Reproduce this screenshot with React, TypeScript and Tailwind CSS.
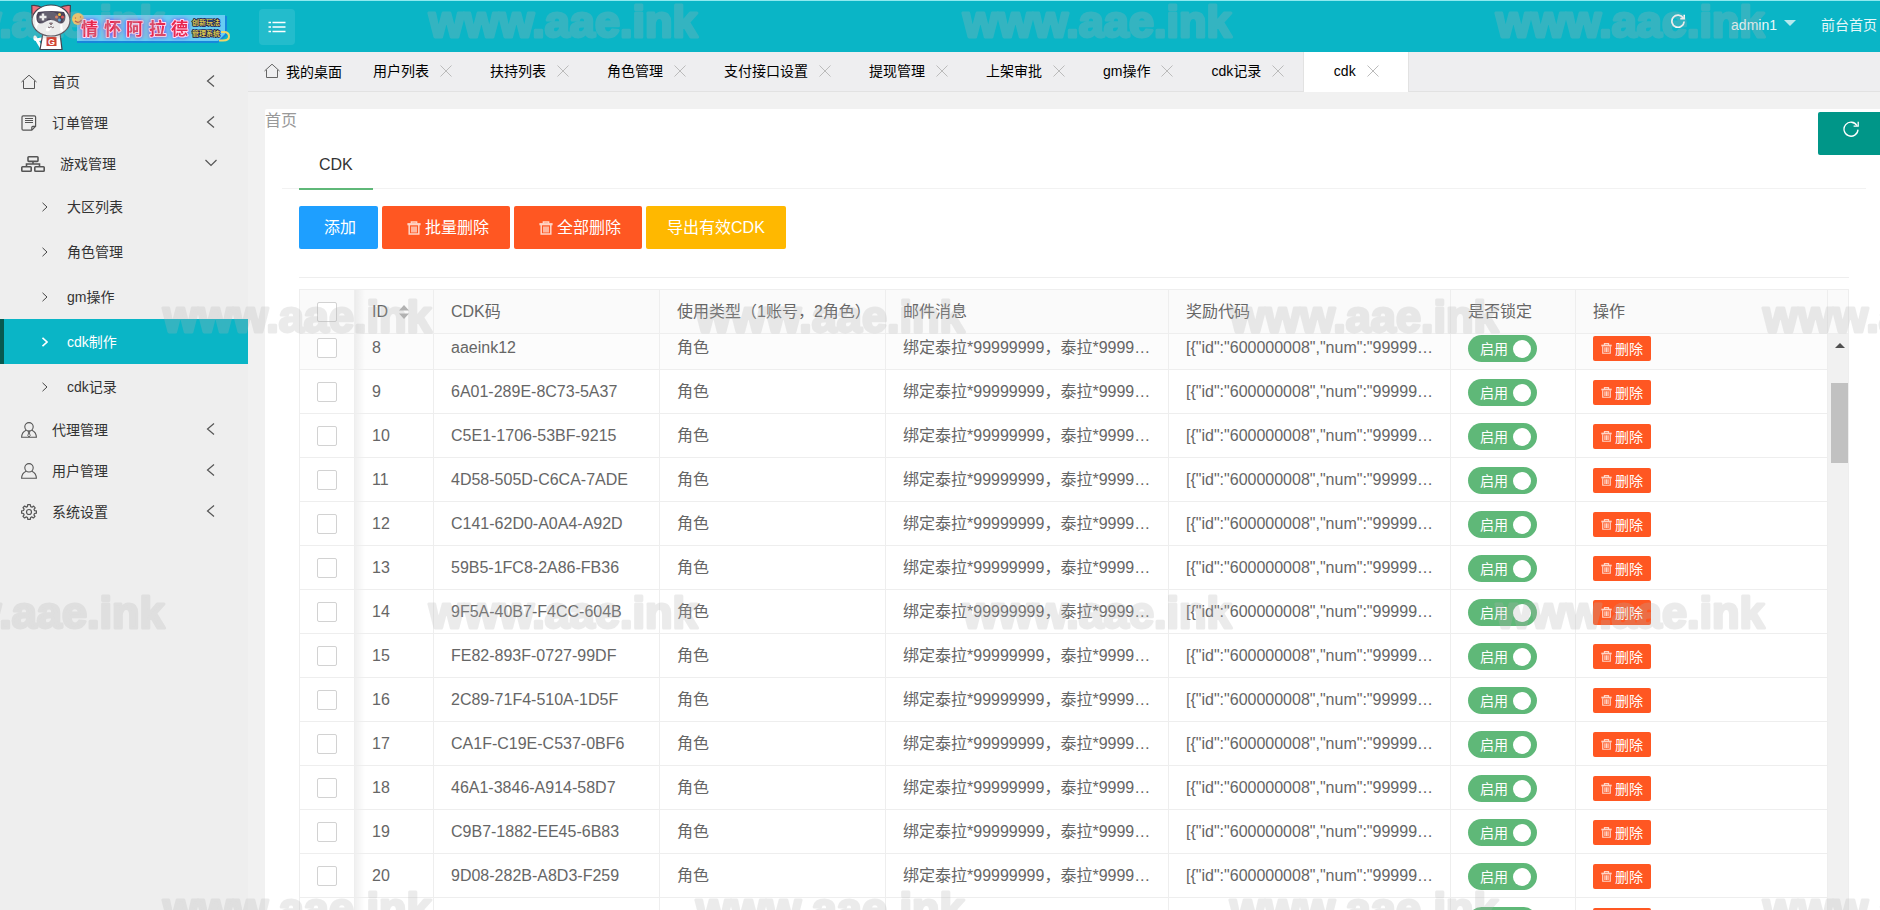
import { useLayoutEffect, useRef, type ReactNode } from 'react'

interface CdkRow {
  id: number
  code: string
}

interface MenuItem {
  label: string
  icon: ReactNode
  open?: boolean
  children?: string[]
}

const rows: CdkRow[] = [
  { id: 8, code: 'aaeink12' },
  { id: 9, code: '6A01-289E-8C73-5A37' },
  { id: 10, code: 'C5E1-1706-53BF-9215' },
  { id: 11, code: '4D58-505D-C6CA-7ADE' },
  { id: 12, code: 'C141-62D0-A0A4-A92D' },
  { id: 13, code: '59B5-1FC8-2A86-FB36' },
  { id: 14, code: '9F5A-40B7-F4CC-604B' },
  { id: 15, code: 'FE82-893F-0727-99DF' },
  { id: 16, code: '2C89-71F4-510A-1D5F' },
  { id: 17, code: 'CA1F-C19E-C537-0BF6' },
  { id: 18, code: '46A1-3846-A914-58D7' },
  { id: 19, code: 'C9B7-1882-EE45-6B83' },
  { id: 20, code: '9D08-282B-A8D3-F259' },
  { id: 21, code: '7B3E-51C0-D9A4-E826' },
]

const mail = '绑定泰拉*99999999，泰拉*99999999'
const reward = '[{"id":"600000008","num":"99999999"}]'

const tabs = ['用户列表', '扶持列表', '角色管理', '支付接口设置', '提现管理', '上架审批', 'gm操作', 'cdk记录', 'cdk']

function HomeIcon({ className = '' }: { className?: string }) {
  return (
    <svg viewBox="0 0 16 16" className={`h-4 w-4 shrink-0 ${className}`} fill="none" stroke="currentColor">
      <path d="M0.5 8 L8 1.2 L15.5 8 M2.5 6.8 V14.5 H13.5 V6.8" />
    </svg>
  )
}

function NoteIcon() {
  return (
    <svg viewBox="0 0 16 16" className="h-4 w-4 shrink-0" fill="none" stroke="currentColor" strokeWidth="1.2">
      <path d="M2.2 0.8 H13.4 Q14.6 0.8 14.6 2 V11.2 L10.8 15.2 H2.2 Q1 15.2 1 14 V2 Q1 0.8 2.2 0.8 Z" />
      <path d="M10.8 15 V12.4 Q10.8 11.4 11.8 11.4 H14.4" />
      <path d="M4 3.5 H12 M4 5.5 H12 M4 7.500 H12" strokeWidth="1" />
    </svg>
  )
}

function SitemapIcon() {
  return (
    <svg viewBox="0 0 24 16" className="h-4 w-6 shrink-0" fill="none" stroke="currentColor" strokeWidth="1.6">
      <rect x="7" y="0.8" width="10" height="4.6" rx="0.8" />
      <rect x="0.8" y="10.8" width="9.4" height="4.4" rx="0.8" />
      <rect x="13.8" y="10.8" width="9.4" height="4.4" rx="0.8" />
      <path d="M12 5.4 V8 M5.5 10.8 V8 H18.5 V10.8" />
    </svg>
  )
}

function UserIcon({ tie = false }: { tie?: boolean }) {
  return (
    <svg viewBox="0 0 16 16" className="h-4 w-4 shrink-0" fill="none" stroke="currentColor" strokeWidth="1.1">
      <circle cx="8" cy="4.8" r="4.2" />
      <path d="M5.2 8.2 Q0.8 10 0.6 15.3 H15.4 Q15.2 10 10.8 8.2" />
      {tie && <path d="M7 9.3 H9 L8.4 11 L9.2 13.6 L8 15 L6.8 13.6 L7.6 11 Z" strokeWidth="0.9" />}
    </svg>
  )
}

function GearIcon() {
  return (
    <svg viewBox="0 0 16 16" className="h-4 w-4 shrink-0" fill="none" stroke="currentColor" strokeWidth="1.2" strokeLinejoin="round">
      <path d="M6.7 0.7 H9.3 L9.7 2.6 L11.1 3.2 L12.6 2.1 L14.2 3.8 L13 5.4 L13.5 6.6 L15.4 6.9 V9.2 L13.5 9.5 L12.9 10.9 L14 12.4 L12.4 14 L10.9 12.9 L9.6 13.5 L9.3 15.3 H6.8 L6.5 13.5 L5.1 12.9 L3.6 14 L2 12.4 L3.1 10.8 L2.5 9.5 L0.6 9.2 V6.9 L2.5 6.5 L3.1 5.2 L2 3.6 L3.6 2 L5.1 3.1 L6.4 2.6 Z" />
      <circle cx="8" cy="8" r="2.5" />
    </svg>
  )
}

function TrashIcon({ className }: { className: string }) {
  return (
    <svg viewBox="0 0 14 14" className={`shrink-0 opacity-75 ${className}`} fill="none" stroke="currentColor" strokeWidth="1.5">
      <path d="M0.4 3.2 H13.6" strokeWidth="2.2" />
      <path d="M4.4 2.4 V0.9 H9.6 V2.4" />
      <path d="M2.2 4 V13 H11.8 V4 M5 5.4 V11.4 M7 5.4 V11.4 M9 5.4 V11.4" />
    </svg>
  )
}

function RefreshIcon({ className, width }: { className: string; width: number }) {
  return (
    <svg viewBox="0 0 16 16" className={className} fill="none" stroke="currentColor" strokeWidth={width}>
      <path d="M14 4.6 A7 7 0 1 0 15 8.6" />
      <path d="M15.2 0.8 V5.2 H10.6" />
    </svg>
  )
}

const menu: MenuItem[] = [
  { label: '首页', icon: <HomeIcon /> },
  { label: '订单管理', icon: <NoteIcon /> },
  {
    label: '游戏管理',
    icon: <SitemapIcon />,
    open: true,
    children: ['大区列表', '角色管理', 'gm操作', 'cdk制作', 'cdk记录'],
  },
  { label: '代理管理', icon: <UserIcon tie /> },
  { label: '用户管理', icon: <UserIcon /> },
  { label: '系统设置', icon: <GearIcon /> },
]

function Logo() {
  return (
    <svg viewBox="0 0 200 48" className="h-12 w-[200px] shrink-0" role="img" aria-label="情怀阿拉德">
      {/* Cat mascot */}
      <path d="M10 36 Q3 38 4 34 M4 34 L10 44" fill="none" stroke="#fff" strokeWidth="3" strokeLinecap="round" />
      <path d="M12 30 H29 L31 46.5 H9 Z" fill="#fff" stroke="#44424e" strokeWidth="1.2" />
      <path d="M1 14 L0.8 2.5 Q6 1.5 12 5 Z M39 14 L39.4 2.5 Q34 1.5 28 5 Z" fill="#f0707c" stroke="#44424e" strokeWidth="1.2" />
      <ellipse cx="20" cy="17.5" rx="19" ry="15.5" fill="#fff" stroke="#44424e" strokeWidth="1.2" />
      <path d="M7 9 Q20 7 33 9 Q36 14 33 19 Q30 22 26 19 Q20 15 14 19 Q9 22 6.5 19 Q4 14 7 9 Z" fill="#4a4458" />
      <path d="M12 10.5 V17.5 M8.5 14 H15.5" stroke="#fff" strokeWidth="2.4" />
      <circle cx="28.5" cy="11.5" r="1.5" fill="#f6c244" />
      <circle cx="31.5" cy="14" r="1.5" fill="#e05555" />
      <circle cx="28.5" cy="17" r="1.5" fill="#4aa3df" />
      <circle cx="25.5" cy="14" r="1.5" fill="#e8734a" />
      <path d="M18.5 20 H21.5 L20 22 Z M17 24 Q18.5 25.5 20 23.5 Q21.5 25.5 23 24" fill="#e58a8a" stroke="#44424e" strokeWidth="0.8" />
      <rect x="15.5" y="34" width="10" height="9" fill="#cf4436" />
      <text x="20.5" y="42" textAnchor="middle" fontSize="9" fontWeight="700" fill="#fff" fontFamily="Liberation Sans, sans-serif">G</text>

      {/* Banner */}
      <path d="M46 13 H196 V32 L187 40 H46 Z" fill="#1787dc" />
      <path d="M46 12 H194 V31 L187 38 H46 Z" fill="#67cdf3" />
      <path d="M190 29 H193 Q198 29 198 33.5 Q198 37.5 192 37.5 H188" fill="none" stroke="#f0d668" strokeWidth="2" />
      <circle cx="47" cy="16" r="6" fill="#f7c85a" />
      <path d="M44.5 14.5 V15.5 M49.5 13.5 V14.5 M44 18 Q47.5 21 50.5 17" fill="none" stroke="#b8472e" strokeWidth="1.2" />
      <g fontFamily="Noto Sans CJK SC, sans-serif" fontWeight="700" strokeLinejoin="round" paintOrder="stroke">
        <text x="50 73 95 118 140" y="32" fontSize="17" stroke="#ffd9f2" strokeWidth="2" fill="#e8274f" className="drop-shadow-[0_0_2px_#7a3ff0]">
          情怀阿拉德
        </text>
        <text x="161" y="22" fontSize="7" stroke="#1c1a55" strokeWidth="1.6" fill="#d9c94c">创新玩法</text>
        <text x="161" y="33" fontSize="7" stroke="#1c1a55" strokeWidth="1.6" fill="#d9c94c">管理系统</text>
      </g>
    </svg>
  )
}

function Header() {
  return (
    <header className="flex h-[52px] shrink-0 items-center border-t border-[#8fe9ef] bg-[#0ab5c6] pr-[3px] pl-[31px] text-sm text-white">
      <Logo />
      <button className="ml-7 flex h-9 w-9 items-center justify-center rounded-sm bg-white/10" aria-label="切换菜单">
        <svg viewBox="0 0 18 12" className="h-3 w-[18px]" stroke="currentColor" strokeWidth="1.3">
          <path d="M0.5 1.5 H3 M4.5 1.5 H17.5 M0.5 6 H3 M4.5 6 H17.5 M0.5 10.5 H3 M4.5 10.5 H17.5" />
        </svg>
      </button>
      <nav className="ml-auto flex items-center">
        <button className="mr-[46px] mb-3" aria-label="刷新">
          <RefreshIcon className="h-[14px] w-[14px]" width={2} />
        </button>
        <button className="mr-[25px] mb-[3px] flex items-center gap-[7px] text-white/90">
          admin1
          <span className="mb-1 border-x-[6px] border-t-[6px] border-x-transparent border-t-white/70" />
        </button>
        <a href="#" className="mb-[3px] text-white/90">前台首页</a>
      </nav>
    </header>
  )
}

function Sidebar() {
  return (
    <aside className="w-[248px] shrink-0 bg-[#eee] pt-[9px] text-sm text-[#333]">
      {menu.map((item) => (
        <div key={item.label}>
          <a href="#" className="flex h-[41px] items-center pr-[31px] pl-[21px]">
            <span className="mr-[15px] text-[#555]">{item.icon}</span>
            {item.label}
            <svg viewBox="0 0 12 12" className="mb-[2px] ml-auto h-3 w-3" fill="none" stroke="#555" strokeWidth="1.2">
              <path d={item.open ? 'M0.5 3 L6 8.5 L11.5 3' : 'M9 0.5 L2.5 6 L9 11.5'} />
            </svg>
          </a>
          {item.children?.map((child) => {
            const active = child === 'cdk制作'
            return (
              <a
                key={child}
                href="#"
                className={`flex h-[45px] items-center gap-[19px] border-l-4 pl-[38px] ${active ? 'border-[#08594f] bg-[#0ab5c6] text-white' : 'border-transparent'}`}
              >
                <svg viewBox="0 0 6 10" className="h-[10px] w-[6px]" fill="none" stroke="currentColor" strokeWidth={active ? 1.6 : 0.9}>
                  <path d="M0.5 0.8 L5 5 L0.5 9.2" />
                </svg>
                {child}
              </a>
            )
          })}
        </div>
      ))}
    </aside>
  )
}

function TabBar() {
  return (
    <div className="flex h-10 shrink-0 border-b border-[#e2e2e2] bg-[#eeeef0] pl-4 text-sm text-black">
      <a href="#" className="mr-3 flex h-[39px] items-center gap-[6px]">
        <HomeIcon className="mb-[2px] text-[#666]" />
        我的桌面
      </a>
      {tabs.map((tab) => (
        <div
          key={tab}
          className={`flex min-w-[106px] items-center justify-center gap-[11px] border-x px-[18px] pb-[2px] ${tab === 'cdk' ? 'h-10 border-[#e2e2e2] bg-white' : 'h-[39px] border-transparent'}`}
        >
          <a href="#">{tab}</a>
          <button aria-label={`关闭${tab}`}>
            <svg viewBox="0 0 12 12" className="h-3 w-3" stroke="#bbb">
              <path d="M0.5 0.5 L11.5 11.5 M11.5 0.5 L0.5 11.5" />
            </svg>
          </button>
        </div>
      ))}
    </div>
  )
}

function Cols() {
  return (
    <colgroup>
      <col className="w-[55px]" />
      <col className="w-[79px]" />
      <col className="w-[226px]" />
      <col className="w-[226px]" />
      <col className="w-[283px]" />
      <col className="w-[282px]" />
      <col className="w-[125px]" />
      <col />
    </colgroup>
  )
}

function Checkbox({ label }: { label: string }) {
  return (
    <input
      type="checkbox"
      aria-label={label}
      className="mx-auto block h-5 w-5 appearance-none rounded-xs border border-[#d2d2d2] bg-white"
    />
  )
}

const cell = 'border-r border-b border-[#eee] pl-[17px] pr-4 text-left font-normal'
const fixedEdge = 'bg-[linear-gradient(to_right,rgba(0,0,0,0.06),transparent_10px)]'

function CdkTable() {
  const body = useRef<HTMLDivElement>(null)

  useLayoutEffect(() => {
    if (body.current) body.current.scrollTop = 8
  }, [])

  return (
    <div className="mt-[11px] flex min-h-0 flex-1 flex-col border border-b-0 border-[#eee] text-base text-[#666]">
      <div className="flex shrink-0 bg-[#fafafa]">
        <div className="min-w-0 flex-1">
          <table className="w-full table-fixed border-separate border-spacing-0">
            <Cols />
            <thead>
              <tr className="h-11">
                <th className="border-r border-b border-[#eee]"><Checkbox label="全选" /></th>
                <th className={`${cell} ${fixedEdge}`}>
                  <div className="flex items-center gap-[11px]">
                    ID
                    <svg viewBox="0 0 10 14" className="h-[14px] w-[10px]" fill="#b2b2b2">
                      <path d="M0 5.5 L5 0 L10 5.5 Z M0 8.5 L5 14 L10 8.5 Z" />
                    </svg>
                  </div>
                </th>
                <th className={cell}>CDK码</th>
                <th className={`${cell} whitespace-nowrap`}>使用类型（1账号，2角色）</th>
                <th className={cell}>邮件消息</th>
                <th className={cell}>奖励代码</th>
                <th className={cell}>是否锁定</th>
                <th className={cell}>操作</th>
              </tr>
            </thead>
          </table>
        </div>
        <div className="w-5 border-b border-[#eee]" />
      </div>

      <div className="flex min-h-0 flex-1">
        <div ref={body} className="min-w-0 flex-1 overflow-hidden">
          <table className="w-full table-fixed border-separate border-spacing-0">
            <Cols />
            <tbody>
              {rows.map((row) => (
                <tr key={row.id} className={`h-11 ${row.id === 8 ? 'bg-[#fcfcfc]' : ''}`}>
                  <td className="border-r border-b border-[#eee]"><Checkbox label={`选择 ${row.id}`} /></td>
                  <td className={`${cell} ${fixedEdge}`}>{row.id}</td>
                  <td className={cell}>{row.code}</td>
                  <td className={cell}>角色</td>
                  <td className={`${cell} truncate`}>{mail}</td>
                  <td className={`${cell} truncate`}>{reward}</td>
                  <td className={`${cell} pt-[2px]`}>
                    <label className="relative flex h-[27px] w-[69px] items-center justify-between rounded-full bg-[#5fb878] pr-[6px] pl-3 text-sm text-white">
                      <input type="checkbox" defaultChecked className="sr-only" />
                      启用
                      <span className="h-[18px] w-[18px] rounded-full bg-white" />
                    </label>
                  </td>
                  <td className={`${cell} pt-[2px]`}>
                    <button className="flex h-[25px] w-[58px] items-center justify-center gap-[3px] rounded-xs bg-[#ff5722] text-sm text-white">
                      <TrashIcon className="h-[11px] w-[11px]" />
                      删除
                    </button>
                  </td>
                </tr>
              ))}
            </tbody>
          </table>
        </div>

        {/* Scrollbar */}
        <div className="flex w-5 flex-col items-end bg-[#f1f1f1]">
          <div className="flex h-[49px] w-[17px] justify-center pt-[9px]">
            <span className="h-0 border-x-[5px] border-b-[5px] border-x-transparent border-b-[#505050]" />
          </div>
          <div className="h-20 w-[17px] bg-[#c1c1c1]" />
        </div>
      </div>
    </div>
  )
}

function Toolbar() {
  return (
    <div className="flex gap-1 text-base text-white">
      <button className="h-[43px] rounded-xs bg-[#1e9fff] pr-[22px] pl-[25px]">添加</button>
      <button className="flex h-[43px] items-center gap-1 rounded-xs bg-[#ff5722] pr-[21px] pl-[25px]">
        <TrashIcon className="h-[14px] w-[14px]" />
        批量删除
      </button>
      <button className="flex h-[43px] items-center gap-1 rounded-xs bg-[#ff5722] pr-[21px] pl-[25px]">
        <TrashIcon className="h-[14px] w-[14px]" />
        全部删除
      </button>
      <button className="h-[43px] rounded-xs bg-[#ffb800] px-[21px]">导出有效CDK</button>
    </div>
  )
}

const marks = [37, 332, 628, 924].flatMap((y, row) =>
  [-104, 429, 963, 1496].map((x) => ({ x: row % 2 ? x + 267 : x, y })),
)

function Watermark() {
  return (
    <svg className="pointer-events-none absolute inset-0 h-full w-full opacity-25" aria-hidden="true">
      <g
        fontFamily="Liberation Sans, sans-serif"
        fontWeight="700"
        fontSize="45"
        fill="#b3b3b3"
        stroke="#b3b3b3"
        strokeWidth="3"
        strokeLinejoin="round"
      >
        {marks.map((m) => (
          <text key={`${m.x}-${m.y}`} x={m.x} y={m.y}>www.aae.ink</text>
        ))}
      </g>
    </svg>
  )
}

export default function App() {
  return (
    <div className="relative flex h-screen flex-col overflow-hidden bg-[#f1f1f1] font-['Liberation_Sans','Noto_Sans_CJK_SC',sans-serif]">
      <Header />
      <div className="flex min-h-0 flex-1">
        <Sidebar />
        <main className="flex min-w-0 flex-1 flex-col">
          <TabBar />
          <section className="relative mt-[17px] ml-[17px] flex min-h-0 flex-1 flex-col rounded-tl-xs bg-white">
            <div className="h-[22px] text-base leading-6 text-[#999]">首页</div>
            <button
              className="absolute top-[3px] right-0 flex h-[43px] w-[62px] items-start rounded-l-xs bg-[#009688] pt-[9px] pl-[25px] text-white"
              aria-label="刷新页面"
            >
              <RefreshIcon className="h-4 w-4" width={1.3} />
            </button>

            <div className="mt-2 mr-[14px] ml-[17px] flex min-h-0 flex-1 flex-col">
              <div className="flex h-[50px] shrink-0 border-b border-[#f2f2f2] pl-[17px]">
                <a href="#" className="flex h-[51px] items-center border-b-2 border-[#5fb878] px-5 pt-[2px] text-base text-[#333]">CDK</a>
              </div>
              <div className="flex min-h-0 flex-1 flex-col px-[17px] pt-[17px]">
                <Toolbar />
                <hr className="mt-7 border-[#eee]" />
                <CdkTable />
              </div>
            </div>
          </section>
        </main>
      </div>
      <Watermark />
    </div>
  )
}
